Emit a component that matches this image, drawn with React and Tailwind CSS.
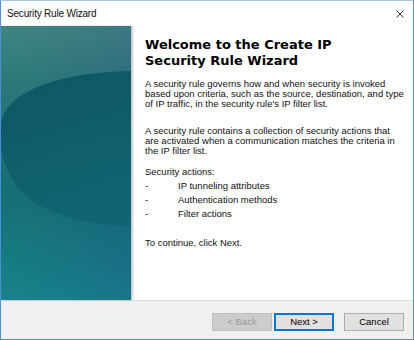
import { useState } from "react";

function SidePanel() {
  return (
    <div className="relative w-[130px] shrink-0 overflow-hidden shadow-[2px_0_2px_rgba(0,0,0,0.22)]">
      <svg width="130" height="274" viewBox="0 0 130 274" className="block">
        <defs>
          <linearGradient id="bg" x1="0" y1="0" x2="0" y2="1">
            <stop offset="0" stopColor="#4c827f" />
            <stop offset="0.25" stopColor="#2d6f72" />
            <stop offset="0.6" stopColor="#15646d" />
            <stop offset="1" stopColor="#177f8a" />
          </linearGradient>
          <linearGradient id="tint" x1="0" y1="0" x2="1" y2="0">
            <stop offset="0" stopColor="#1a8f8a" stopOpacity="0.25" />
            <stop offset="1" stopColor="#1c5f8a" stopOpacity="0.3" />
          </linearGradient>
          <linearGradient id="blob" x1="0" y1="0" x2="0.3" y2="1">
            <stop offset="0" stopColor="#0b535f" />
            <stop offset="1" stopColor="#106472" />
          </linearGradient>
        </defs>
        <rect width="130" height="274" fill="url(#bg)" />
        <rect width="130" height="274" fill="url(#tint)" />
        <path
          d="M130,45 C75,46 18,58 3,88 C-8,112 2,160 40,180 C70,196 105,200 130,200 Z"
          fill="url(#blob)"
          opacity="0.92"
        />
      </svg>
    </div>
  );
}

export default function App() {
  const [focused] = useState("next");

  return (
    <div className="w-[414px] h-[340px] bg-white border border-[#4a90d9] border-t-[#a9c6e6] flex flex-col font-['Liberation_Sans',Arial,sans-serif] text-black overflow-hidden">
      {/* Title bar */}
      <div className="h-[25px] flex items-center justify-between pl-[6px] pr-[9px]">
        <span className="text-[10px] tracking-[-0.2px] text-[#111]">Security Rule Wizard</span>
        <svg width="8" height="8" viewBox="0 0 8 8">
          <path d="M0.5 0.5 L7.5 7.5 M7.5 0.5 L0.5 7.5" stroke="#333" strokeWidth="1" />
        </svg>
      </div>

      {/* Body */}
      <div className="flex h-[274px]">
        <SidePanel />
        <div className="pl-[14px] pt-[11px] text-[9.5px] leading-[10px] text-[#111] whitespace-nowrap">
          <h1 className="font-['DejaVu_Sans',Verdana,sans-serif] font-bold text-[13px] leading-[16px] text-black">
            Welcome to the Create IP
            <br />
            Security Rule Wizard
          </h1>
          <p className="mt-[10px]">
            A security rule governs how and when security is invoked
            <br />
            based upon criteria, such as the source, destination, and type
            <br />
            of IP traffic, in the security rule's IP filter list.
          </p>
          <p className="mt-[17px]">
            A security rule contains a collection of security actions that
            <br />
            are activated when a communication matches the criteria in
            <br />
            the IP filter list.
          </p>
          <p className="mt-[11px]">Security actions:</p>
          <div className="mt-[2px]">
            {["IP tunneling attributes", "Authentication methods", "Filter actions"].map((t) => (
              <div key={t} className="flex leading-[14px]">
                <span className="w-[33px]">-</span>
                <span>{t}</span>
              </div>
            ))}
          </div>
          <p className="mt-[17px]">To continue, click Next.</p>
        </div>
      </div>

      {/* Footer */}
      <div className="flex-1 bg-[#f0f0f0] border-t border-[#dadada] flex justify-end items-start pt-[12px] pr-[9px] text-[9.5px]">
        <button className="w-[60px] h-[18px] bg-[#cccccc] border border-[#bfbfbf] text-[#9a9a9a] leading-none">
          &lt; Back
        </button>
        <button
          className={`ml-[2px] w-[60px] h-[18px] bg-[#e1e1e1] border leading-none text-black ${
            focused === "next" ? "border-[#0078d7] shadow-[inset_0_0_0_1px_#0078d7]" : "border-[#adadad]"
          }`}
        >
          Next &gt;
        </button>
        <button className="ml-[10px] w-[60px] h-[18px] bg-[#e1e1e1] border border-[#adadad] leading-none text-black">
          Cancel
        </button>
      </div>
    </div>
  );
}
